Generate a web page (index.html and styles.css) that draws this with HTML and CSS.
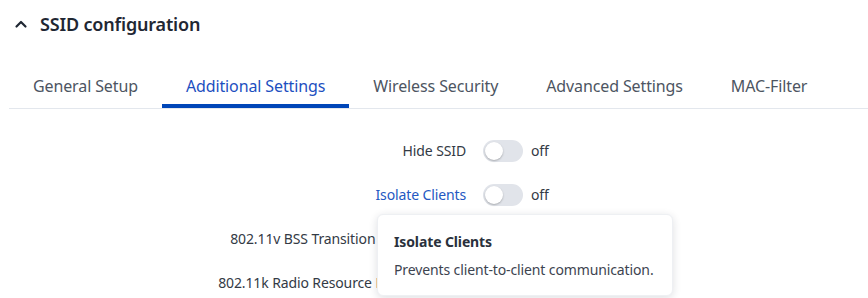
FILE: index.html
```html
<!DOCTYPE html>
<html lang="en">

<head>
    <meta charset="UTF-8">
    <meta name="viewport" content="width=device-width, initial-scale=1.0">
    <title>SSID configuration</title>
    <link rel="stylesheet" href="styles.css">
</head>

<body>
    <div class="section">
        <div class="section-head">
            <svg class="chevron" width="14" height="10" viewBox="0 0 14 10">
                <polyline points="2.5,7.5 7,3 11.5,7.5" fill="none" stroke="#1f2733" stroke-width="2.2" stroke-linecap="round" stroke-linejoin="round" />
            </svg>
            <h2>SSID configuration</h2>
        </div>

        <div class="tabs">
            <a class="tab" href="#">General Setup</a>
            <a class="tab active" href="#">Additional Settings</a>
            <a class="tab" href="#">Wireless Security</a>
            <a class="tab" href="#">Advanced Settings</a>
            <a class="tab" href="#">MAC-Filter</a>
        </div>

        <div class="form">
            <div class="row">
                <label class="label">Hide SSID</label>
                <span class="switch"><span class="knob"></span></span>
                <span class="state">off</span>
            </div>
            <div class="row">
                <label class="label hint">Isolate Clients</label>
                <span class="switch"><span class="knob"></span></span>
                <span class="state">off</span>
                <div class="tooltip">
                    <div class="tooltip-title">Isolate Clients</div>
                    <div class="tooltip-text">Prevents client-to-client communication.</div>
                </div>
            </div>
            <div class="row">
                <label class="label">802.11v BSS Transition Management</label>
                <span class="switch"><span class="knob"></span></span>
                <span class="state">off</span>
            </div>
            <div class="row">
                <label class="label">802.11k Radio Resource Measurement</label>
                <span class="switch"><span class="knob"></span></span>
                <span class="state">off</span>
            </div>
        </div>
    </div>
</body>

</html>
```

FILE: styles.css
```css
body {
    margin: 0;
    background-color: #fff;
    font-family: "Noto Sans", "Open Sans", sans-serif;
    color: #333a45;
    letter-spacing: -0.12px;
    overflow: hidden;
}

.section-head {
    display: flex;
    align-items: center;
    padding: 12px 0 0 14px;
    height: 24px;
}

.chevron {
    display: block;
    margin-right: 12px;
    margin-top: -1px;
}

.section-head h2 {
    margin: 0;
    font-size: 18px;
    line-height: 24px;
    font-weight: 600;
    letter-spacing: -0.18px;
    color: #1f2733;
}

.tabs {
    display: flex;
    margin: 29px 0 0 9px;
    border-bottom: 1px solid #e3e7ed;
}

.tab {
    padding: 10px 24px 7px;
    font-size: 16px;
    line-height: 22px;
    color: #4d5562;
    text-decoration: none;
    border-bottom: 4px solid transparent;
}

.tab.active {
    color: #1d4fbf;
    border-bottom-color: #0046b8;
}

.form {
    padding-top: 20px;
}

.row {
    position: relative;
    display: flex;
    align-items: center;
    height: 44px;
}

.label {
    width: 466px;
    text-align: right;
    font-size: 14px;
    line-height: 20px;
    color: #333a45;
    white-space: nowrap;
}

.label.hint {
    color: #2458c2;
}

.switch {
    position: relative;
    width: 40px;
    height: 22px;
    margin-left: 17px;
    border-radius: 11px;
    background-color: #e1e4ea;
}

.knob {
    position: absolute;
    top: 2px;
    left: 2px;
    width: 18px;
    height: 18px;
    border-radius: 50%;
    background-color: #fff;
    box-shadow: 0 1px 2px rgba(0, 0, 0, 0.25);
}

.state {
    margin-left: 8px;
    font-size: 14px;
    line-height: 20px;
    color: #333a45;
}

.tooltip {
    position: absolute;
    top: 41px;
    left: 377px;
    width: 262px;
    padding: 17px 16px 15px;
    background-color: #fff;
    border: 1px solid #eef0f3;
    border-radius: 6px;
    box-shadow: 0 2px 8px rgba(20, 30, 50, 0.14);
    white-space: nowrap;
    z-index: 2;
}

.tooltip-title {
    font-size: 14px;
    line-height: 20px;
    font-weight: 700;
    color: #2a313c;
}

.tooltip-text {
    margin-top: 8px;
    font-size: 14px;
    line-height: 20px;
    color: #3d4450;
}
```
